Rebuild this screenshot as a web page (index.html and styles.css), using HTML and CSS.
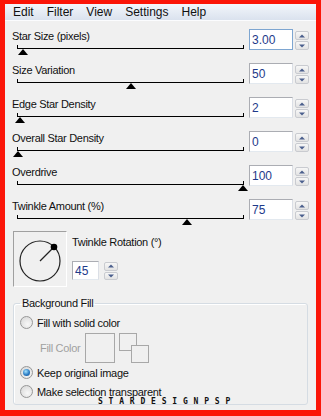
FILE: index.html
```html
<!DOCTYPE html>
<html>
  <head>
    <meta charset="UTF-8">
    <title>Star Field</title>
    <link rel="stylesheet" href="styles.css">
  </head>
  <body>
    <div class="window">
      <nav class="menubar">
        <span>Edit</span>
        <span>Filter</span>
        <span>View</span>
        <span>Settings</span>
        <span>Help</span>
      </nav>

      <main class="panel">
        <div class="row">
          <div class="slider">
            <span class="label">Star Size (pixels)</span>
            <div class="track"><span class="thumb" style="left: 2%"></span></div>
          </div>
          <input class="num focus" value="3.00">
          <div class="spin"><span class="up"></span><span class="down"></span></div>
        </div>

        <div class="row">
          <div class="slider">
            <span class="label">Size Variation</span>
            <div class="track"><span class="thumb" style="left: 50%"></span></div>
          </div>
          <input class="num" value="50">
          <div class="spin"><span class="up"></span><span class="down"></span></div>
        </div>

        <div class="row">
          <div class="slider">
            <span class="label">Edge Star Density</span>
            <div class="track"><span class="thumb" style="left: 1%"></span></div>
          </div>
          <input class="num" value="2">
          <div class="spin"><span class="up"></span><span class="down"></span></div>
        </div>

        <div class="row">
          <div class="slider">
            <span class="label">Overall Star Density</span>
            <div class="track"><span class="thumb" style="left: 0%"></span></div>
          </div>
          <input class="num" value="0">
          <div class="spin"><span class="up"></span><span class="down"></span></div>
        </div>

        <div class="row">
          <div class="slider">
            <span class="label">Overdrive</span>
            <div class="track"><span class="thumb" style="left: 100%"></span></div>
          </div>
          <input class="num" value="100">
          <div class="spin"><span class="up"></span><span class="down"></span></div>
        </div>

        <div class="row">
          <div class="slider">
            <span class="label">Twinkle Amount (%)</span>
            <div class="track"><span class="thumb" style="left: 75%"></span></div>
          </div>
          <input class="num" value="75">
          <div class="spin"><span class="up"></span><span class="down"></span></div>
        </div>

        <div class="rotation">
          <div class="dial">
            <svg width="52" height="54" viewBox="0 0 52 54">
              <circle cx="26" cy="29" r="20" fill="none" stroke="#222" stroke-width="1.2"/>
              <line x1="26" y1="29" x2="40" y2="15" stroke="#222" stroke-width="1.2"/>
              <circle cx="40" cy="15" r="3.3" fill="#000"/>
            </svg>
          </div>
          <div class="rot-ctl">
            <span class="label">Twinkle Rotation (°)</span>
            <div class="rot-input">
              <input class="num short" value="45">
              <div class="spin small"><span class="up"></span><span class="down"></span></div>
            </div>
          </div>
        </div>

        <fieldset class="group">
          <legend>Background Fill</legend>
          <label class="radio"><i></i>Fill with solid color</label>
          <div class="fill">
            <span class="muted">Fill Color</span>
            <span class="swatch"></span>
            <span class="swap"><b></b><b></b></span>
          </div>
          <label class="radio keep"><i class="on"></i>Keep original image</label>
          <label class="radio"><i></i>Make selection transparent</label>
        </fieldset>
      </main>

      <div class="logo">STARDESIGNPSP</div>
    </div>
  </body>
</html>
```

FILE: styles.css
```css
* {
  box-sizing: border-box;
}

body {
  margin: 0;
}

.window {
  position: relative;
  width: 321px;
  height: 416px;
  border-style: solid;
  border-color: #fb1508;
  border-width: 4px 5px 6px 5px;
  background: #f0f0f0;
  font-family: "Liberation Sans", Arial, sans-serif;
  font-size: 11px;
  letter-spacing: -0.3px;
  color: #111;
}

.menubar {
  display: flex;
  gap: 13px;
  align-items: center;
  height: 17px;
  padding-left: 8px;
  font-size: 12px;
  letter-spacing: 0;
  background: linear-gradient(#f3f6fb, #dae2ee);
  border-bottom: 1px solid #fbfcfe;
}

.panel {
  padding: 8px 7px 0;
}

.row {
  display: grid;
  grid-template-columns: 1fr 44px 14px;
  column-gap: 2px;
  height: 34px;
}

.slider {
  padding-right: 3px;
}

.label {
  display: block;
  height: 14px;
  line-height: 14px;
  white-space: nowrap;
}

.track {
  position: relative;
  height: 4px;
  margin: 2px 0 0 5px;
  border: 1px solid #000;
  border-top: 0;
}

.thumb {
  position: absolute;
  top: 4px;
  width: 0;
  height: 0;
  border-left: 5px solid transparent;
  border-right: 5px solid transparent;
  border-bottom: 6px solid #000;
  transform: translateX(-50%);
}

.num {
  width: 44px;
  height: 21px;
  margin: 0;
  padding: 0 0 0 2px;
  border: 1px solid #abadb3;
  border-right-color: #dbdfe6;
  border-bottom-color: #e3e9ef;
  background: #fff;
  font: 12px "Liberation Sans", Arial, sans-serif;
  color: #1e3a8a;
  outline: none;
}

.num.focus {
  border-color: #7ea6d1;
}

.num.short {
  width: 27px;
  height: 19px;
}

.spin {
  display: flex;
  flex-direction: column;
  gap: 1px;
  height: 19px;
  margin-top: 2px;
}

.spin span {
  position: relative;
  flex: 1;
  border: 1px solid #c9cbd0;
  border-radius: 2px;
  background: linear-gradient(#f7f7f7, #e3e3e3);
}

.spin span::after {
  content: "";
  position: absolute;
  left: 50%;
  top: 50%;
  transform: translate(-50%, -50%);
  border-left: 3px solid transparent;
  border-right: 3px solid transparent;
}

.spin .up::after {
  border-bottom: 3px solid #4b5f8d;
}

.spin .down::after {
  border-top: 3px solid #4b5f8d;
}

.spin.small {
  width: 14px;
  height: 18px;
  margin-top: 1px;
}

.rotation {
  display: flex;
  gap: 5px;
  margin: -2px 0 0 1px;
}

.dial {
  width: 54px;
  height: 56px;
  border: 1px solid;
  border-color: #a0a0a0 #fff #fff #a0a0a0;
}

.dial svg {
  display: block;
}

.rot-ctl {
  padding-top: 4px;
}

.rot-input {
  display: flex;
  gap: 5px;
  margin-top: 12px;
}

.group {
  margin: 9px 1px 0;
  padding: 0 6px 6px;
  border: 1px solid #d5dce3;
  border-radius: 3px;
  box-shadow: inset 1px 1px 0 #fff;
}

.group legend {
  padding: 0 2px;
  line-height: 14px;
}

.radio {
  display: flex;
  align-items: center;
  gap: 4px;
  height: 13px;
  margin-top: 6px;
  white-space: nowrap;
}

.radio.keep {
  margin-top: 3px;
}

.radio i {
  position: relative;
  flex: none;
  width: 13px;
  height: 13px;
  border: 1px solid #979797;
  border-radius: 50%;
  background: radial-gradient(circle at 60% 65%, #f8f8f8, #d4d4d4);
}

.radio i.on::after {
  content: "";
  position: absolute;
  left: 2px;
  top: 2px;
  width: 7px;
  height: 7px;
  border-radius: 50%;
  background: radial-gradient(circle at 40% 35%, #a6e4ff, #2b7cc4 55%, #184f8a);
}

.fill {
  display: flex;
  align-items: center;
  height: 30px;
  margin: 4px 0 0 20px;
}

.muted {
  width: 45px;
  color: #a0a0a0;
  white-space: nowrap;
}

.swatch {
  width: 30px;
  height: 30px;
  border: 1px solid #a8a8a8;
}

.swap {
  position: relative;
  width: 30px;
  height: 30px;
  margin-left: 4px;
}

.swap b {
  position: absolute;
  width: 18px;
  height: 18px;
  border: 1px solid #a8a8a8;
  background: #f0f0f0;
}

.swap b:first-child {
  left: 0;
  top: 0;
}

.swap b:last-child {
  right: 0;
  bottom: 0;
}

.logo {
  position: absolute;
  left: 93px;
  top: 394px;
  font: bold 8px "DejaVu Sans Mono", monospace;
  line-height: 8px;
  letter-spacing: 5.8px;
  color: #111;
}
```
